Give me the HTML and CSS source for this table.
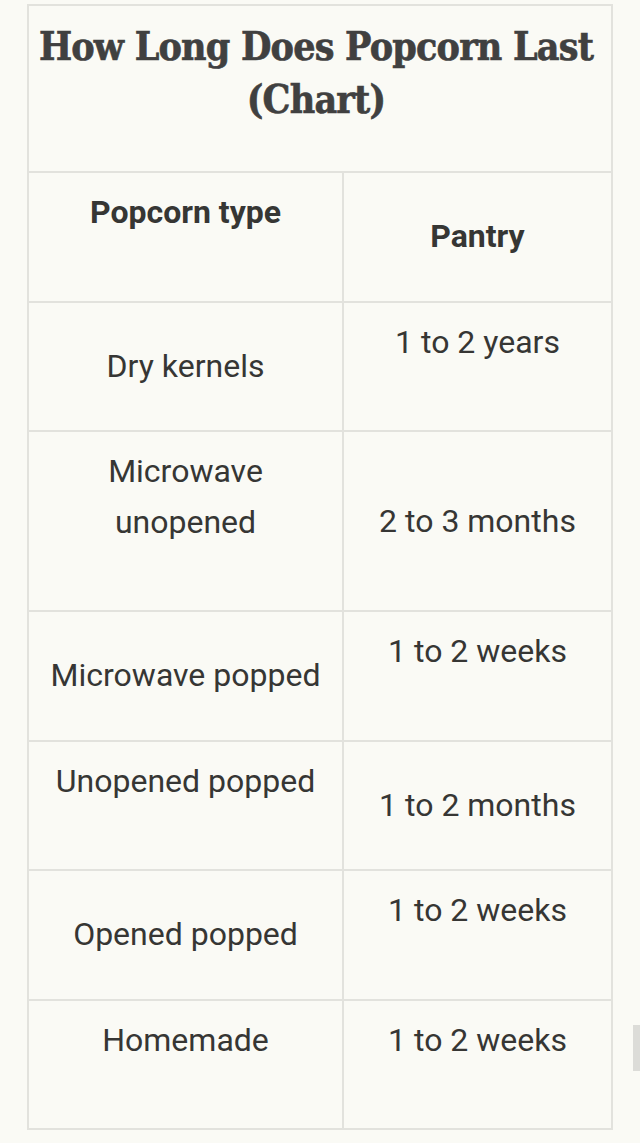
FILE: index.html
```html
<!DOCTYPE html>
<html>
<head>
<meta charset="utf-8">
<link rel="stylesheet" href="styles.css">
</head>
<body>
<div class="page">
  <table class="chart">
    <tr class="title-row">
      <td colspan="2" class="title-cell"><h1 class="title">How Long Does Popcorn Last (Chart)</h1></td>
    </tr>
    <tr class="row">
      <th class="cell left top">Popcorn type</th>
      <th class="cell right mid">Pantry</th>
    </tr>
    <tr class="row">
      <td class="cell left mid">Dry kernels</td>
      <td class="cell right top">1 to 2 years</td>
    </tr>
    <tr class="row tall">
      <td class="cell left top">Microwave<br>unopened</td>
      <td class="cell right mid">2 to 3 months</td>
    </tr>
    <tr class="row">
      <td class="cell left mid">Microwave popped</td>
      <td class="cell right top">1 to 2 weeks</td>
    </tr>
    <tr class="row">
      <td class="cell left top">Unopened popped</td>
      <td class="cell right mid">1 to 2 months</td>
    </tr>
    <tr class="row">
      <td class="cell left mid">Opened popped</td>
      <td class="cell right top">1 to 2 weeks</td>
    </tr>
    <tr class="row">
      <td class="cell left top">Homemade</td>
      <td class="cell right top">1 to 2 weeks</td>
    </tr>
  </table>
  <div class="scroll-thumb"></div>
</div>
</body>
</html>
```

FILE: styles.css
```css
html, body {
  margin: 0;
  padding: 0;
  background: #fafaf5;
}
.page {
  position: relative;
  width: 640px;
  height: 1143px;
  padding: 4px 0 0 27px;
  box-sizing: border-box;
}
.chart {
  border-collapse: collapse;
  width: 586px;
  color: #363634;
  font-family: Roboto, "Liberation Sans", sans-serif;
}
.chart td, .chart th {
  border: 2px solid #e2e2dd;
  text-align: center;
  padding: 0;
}
.chart .title-cell {
  height: 165px;
  vertical-align: top;
}
.title {
  margin: 0;
  padding: 14px 10px 0 2px;
  font-family: "DejaVu Serif Condensed", "DejaVu Serif", serif;
  font-weight: bold;
  font-size: 39px;
  line-height: 53px;
  color: #404040;
  letter-spacing: -0.8px;
  -webkit-text-stroke: 0.6px #404040;
}
.row {
  height: 129.5px;
}
.row.tall {
  height: 180px;
}
.chart .cell {
  font-size: 32px;
  line-height: 51px;
  font-weight: 400;
}
.chart th.cell {
  font-weight: 700;
}
.chart .left {
  width: 313px;
}
.chart .top {
  vertical-align: top;
  padding-top: 14px;
}
.chart .mid {
  vertical-align: middle;
}
.scroll-thumb {
  position: absolute;
  right: 0;
  top: 1025px;
  width: 7px;
  height: 46px;
  background: #dcdcd8;
}
```
